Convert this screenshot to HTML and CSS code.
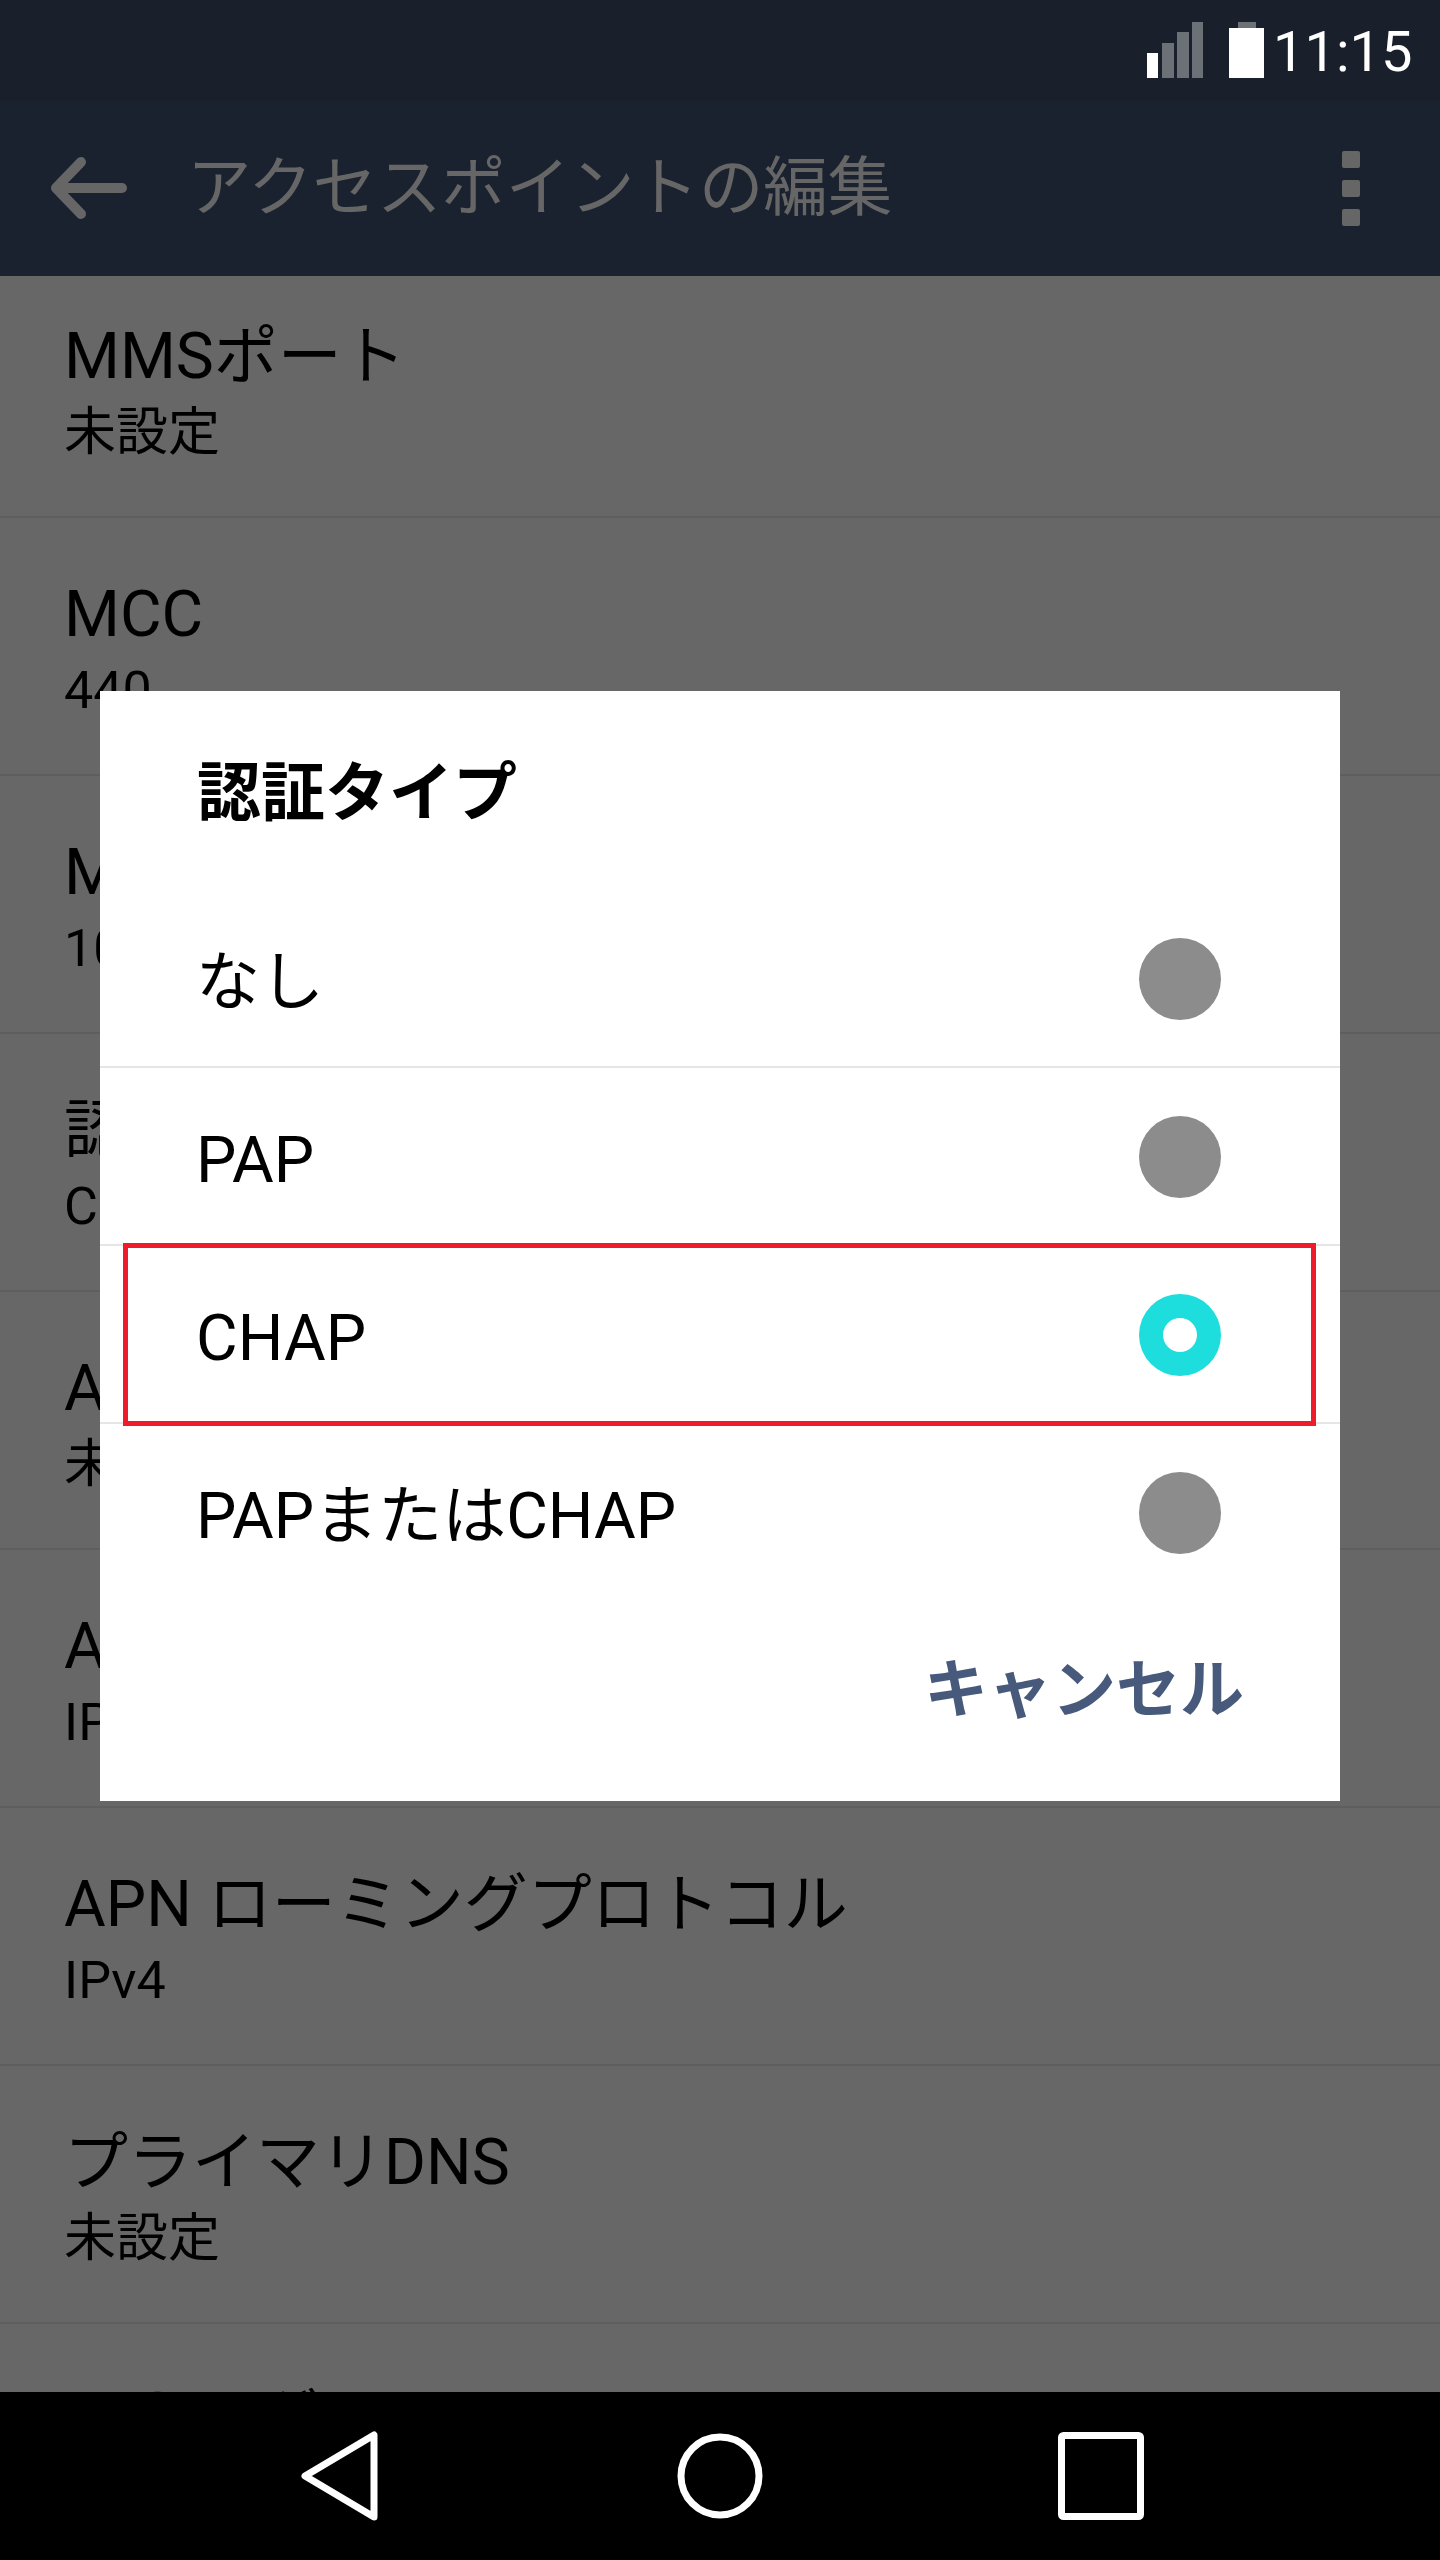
FILE: index.html
```html
<!DOCTYPE html>
<html lang="ja">
<head>
<meta charset="utf-8">
<title>アクセスポイントの編集</title>
<link rel="stylesheet" href="styles.css">
</head>
<body>
<div class="screen">
  <header class="status">
    <svg class="signal" width="57" height="56" viewBox="0 0 57 56" aria-hidden="true">
      <rect x="0" y="31" width="11" height="25" fill="#fff"/>
      <rect x="15" y="21" width="12" height="35" fill="#6c7178"/>
      <rect x="30" y="10" width="12" height="46" fill="#6c7178"/>
      <rect x="45" y="0" width="11" height="56" fill="#6c7178"/>
    </svg>
    <svg class="battery" width="35" height="56" viewBox="0 0 35 56" aria-hidden="true">
      <rect x="9" y="0" width="18" height="7" fill="#6c7178"/>
      <rect x="0" y="6" width="35" height="50" fill="#fff"/>
    </svg>
    <span class="time">11:15</span>
  </header>
  <div class="appbar">
    <svg class="back" width="78" height="62" viewBox="0 0 78 62" aria-hidden="true">
      <path d="M73 31H7M32 5L7 31l25 26" fill="none" stroke="#666" stroke-width="10" stroke-linecap="round" stroke-linejoin="round"/>
    </svg>
    <h1 class="apptitle">アクセスポイントの編集</h1>
    <div class="dots"><i></i><i></i><i></i></div>
  </div>
  <main class="list">
    <div class="row first"><div class="t">MMSポート</div><div class="s">未設定</div></div>
    <div class="row"><div class="t">MCC</div><div class="s">440</div></div>
    <div class="row"><div class="t">MNC</div><div class="s">10</div></div>
    <div class="row"><div class="t">認証タイプ</div><div class="s">CHAP</div></div>
    <div class="row"><div class="t">APNタイプ</div><div class="s">未設定</div></div>
    <div class="row"><div class="t">APNプロトコル</div><div class="s">IPv4</div></div>
    <div class="row"><div class="t">APN ローミングプロトコル</div><div class="s">IPv4</div></div>
    <div class="row"><div class="t">プライマリDNS</div><div class="s">未設定</div></div>
    <div class="row"><div class="t">セカンダリDNS</div><div class="s">未設定</div></div>
  </main>
  <nav class="navbar">
    <svg width="80" height="90" viewBox="0 0 80 90" aria-hidden="true"><path d="M73 4V86L4 45Z" fill="none" stroke="#fff" stroke-width="7" stroke-linejoin="round"/></svg>
    <svg width="86" height="86" viewBox="0 0 86 86" aria-hidden="true"><circle cx="43" cy="43" r="39" fill="none" stroke="#fff" stroke-width="7"/></svg>
    <svg width="86" height="88" viewBox="0 0 86 88" aria-hidden="true"><rect x="3.5" y="3.5" width="79" height="81" rx="2" fill="none" stroke="#fff" stroke-width="7"/></svg>
  </nav>
  <section class="dialog">
    <h2 class="dtitle">認証タイプ</h2>
    <div class="opts">
      <div class="opt"><span class="label">なし</span><i class="radio"></i></div>
      <div class="opt"><span class="label">PAP</span><i class="radio"></i></div>
      <div class="opt"><span class="label">CHAP</span><i class="radio on"></i></div>
      <div class="opt"><span class="label">PAPまたはCHAP</span><i class="radio"></i></div>
    </div>
    <div class="actions"><span class="cancel">キャンセル</span></div>
    <div class="mark"></div>
  </section>
</div>
</body>
</html>
```
FILE: styles.css
```css
* { box-sizing: border-box; }
html, body { margin: 0; padding: 0; background: #000; }
body { font-family: Roboto, "Noto Sans CJK JP", sans-serif; }
.screen { position: relative; width: 1440px; height: 2560px; display: flex; flex-direction: column; overflow: hidden; background: #676767; }

.status { height: 100px; flex: none; background: #19202b; display: flex; align-items: flex-start; padding-top: 22px; padding-left: 1147px; }
.battery { margin-left: 25px; }
.time { margin-left: 9px; font-size: 56px; line-height: 56px; color: #fff; margin-top: 2px; }

.appbar { height: 176px; flex: none; background: #1b222f; display: flex; align-items: center; padding-left: 49px; position: relative; }
.back { flex: none; }
.apptitle { margin: 0 0 0 60px; font-size: 64.4px; font-weight: 400; color: #666; line-height: 80px; white-space: nowrap; }
.dots { margin-left: auto; margin-right: 80px; display: flex; flex-direction: column; gap: 12px; }
.dots i { display: block; width: 18px; height: 17px; border-radius: 2px; background: #666; }

.list { flex: 1; min-height: 0; overflow: hidden; color: #000; }
.row { height: 258px; border-bottom: 2px solid #5e5e5e; padding: 59px 0 0 64px; }
.row.first { height: 242px; padding-top: 43px; }
.t { font-size: 64px; line-height: 75px; white-space: nowrap; }
.s { font-size: 52px; line-height: 78px; white-space: nowrap; }

.navbar { height: 168px; flex: none; background: #000; display: flex; align-items: center; padding-left: 301px; gap: 0; position: relative; }
.navbar svg:nth-child(2) { margin-left: 296px; }
.navbar svg:nth-child(3) { margin-left: 295px; }

.dialog { position: absolute; left: 100px; top: 691px; width: 1240px; height: 1110px; background: #fff; color: #000; padding-top: 199px; }
.dtitle { position: absolute; left: 97px; top: 62px; margin: 0; font-size: 64px; line-height: 82px; font-weight: 700; }
.opts { display: flex; flex-direction: column; }
.opt { height: 178px; border-bottom: 2px solid #e6e6e6; display: flex; align-items: center; justify-content: space-between; padding: 2px 119px 0 96px; font-size: 64px; }
.opt:last-child { border-bottom-color: transparent; }
.label { line-height: 80px; padding-top: 7px; }
.radio { display: block; width: 82px; height: 82px; border-radius: 50%; background: #8c8c8c; }
.radio.on { background: #1ddddd; position: relative; }
.radio.on::after { content: ""; position: absolute; left: 24px; top: 24px; width: 34px; height: 34px; border-radius: 50%; background: #fff; }
.actions { display: flex; justify-content: flex-end; padding: 44px 96px 0 0; }
.cancel { font-size: 64px; line-height: 90px; font-weight: 700; color: #485a7c; }
.mark { position: absolute; left: 23px; top: 552px; width: 1193px; height: 183px; border: 5px solid #ee1c2b; }
```
